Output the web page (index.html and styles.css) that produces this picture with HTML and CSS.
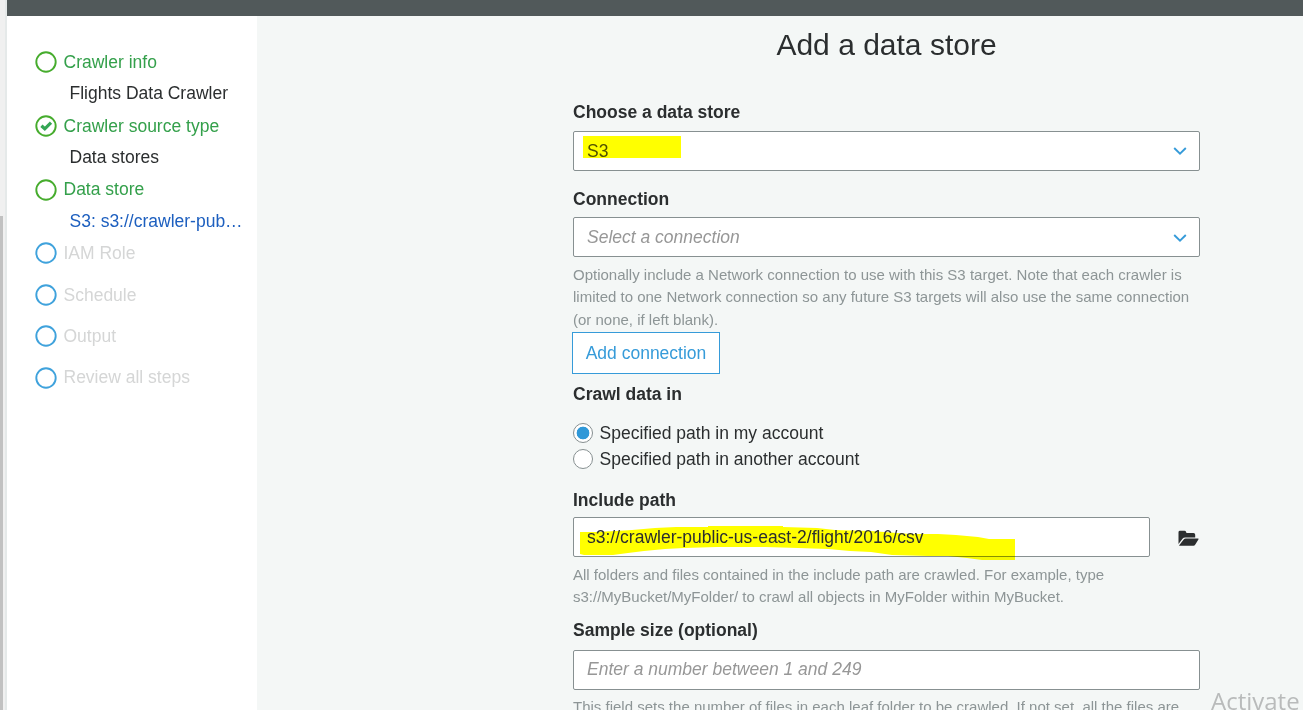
FILE: index.html
```html
<!DOCTYPE html>
<html lang="en">
<head>
<meta charset="utf-8">
<title>Add a data store</title>
<link rel="stylesheet" href="styles.css">
</head>
<body>
<div class="gutter"><div class="thumb"></div></div>
<div class="app">
  <header class="topbar"></header>
  <div class="body">
    <nav class="steps">
      <div class="step done"><svg class="ring" viewBox="0 0 22 22"><circle cx="11" cy="11" r="9.7"/></svg><span>Crawler info</span></div>
      <div class="detail">Flights Data Crawler</div>
      <div class="step done"><svg class="ring" viewBox="0 0 22 22"><circle cx="11" cy="11" r="9.7"/><path class="check" d="M6.4 10.7 9.8 13.8 16 7.7"/></svg><span>Crawler source type</span></div>
      <div class="detail">Data stores</div>
      <div class="step done"><svg class="ring" viewBox="0 0 22 22"><circle cx="11" cy="11" r="9.7"/></svg><span>Data store</span></div>
      <div class="detail current">S3: s3://crawler-pub…</div>
      <div class="step todo"><svg class="ring" viewBox="0 0 22 22"><circle cx="11" cy="11" r="9.7"/></svg><span>IAM Role</span></div>
      <div class="step todo"><svg class="ring" viewBox="0 0 22 22"><circle cx="11" cy="11" r="9.7"/></svg><span>Schedule</span></div>
      <div class="step todo"><svg class="ring" viewBox="0 0 22 22"><circle cx="11" cy="11" r="9.7"/></svg><span>Output</span></div>
      <div class="step todo"><svg class="ring" viewBox="0 0 22 22"><circle cx="11" cy="11" r="9.7"/></svg><span>Review all steps</span></div>
    </nav>
    <main class="form">
      <h1 class="title">Add a data store</h1>

      <section class="group store">
        <div class="label">Choose a data store</div>
        <div class="box select"><span class="value picked">S3</span><svg class="chevron" viewBox="0 0 14 8"><path d="M1.2 1 7 6.6 12.8 1"/></svg><i class="mark-store"></i></div>
      </section>

      <section class="group connection">
        <div class="label">Connection</div>
        <div class="box select"><span class="placeholder">Select a connection</span><svg class="chevron" viewBox="0 0 14 8"><path d="M1.2 1 7 6.6 12.8 1"/></svg></div>
        <p class="hint">Optionally include a Network connection to use with this S3 target. Note that each crawler is<br>limited to one Network connection so any future S3 targets will also use the same connection<br>(or none, if left blank).</p>
        <div class="button">Add connection</div>
      </section>

      <section class="group crawl">
        <div class="label">Crawl data in</div>
        <div class="radio"><i class="dot on"></i><span>Specified path in my account</span></div>
        <div class="radio"><i class="dot"></i><span>Specified path in another account</span></div>
      </section>

      <section class="group path">
        <div class="label">Include path</div>
        <div class="row">
          <div class="box"><span class="value">s3://crawler-public-us-east-2/flight/2016/csv</span>
            <svg class="mark-path" viewBox="0 0 436 36"><path d="M0 7H15L36 6 52 5 75 3 96 2H128V1H203V2L237 3 255 5 291 6 330 9H358L376 10 398 12 409 14H435V35H402L387 33 368 31 348 31 312 30 291 27 270 26 248 24 218 23 185 22H137L104 23 85 24 64 26 48 28 33 30H4L0 29Z"/></svg>
          </div>
          <svg class="folder" viewBox="0 0 21 17"><path d="M.5 14V2.2Q.5.8 2 .8H6.5Q7.8.8 8.2 2.2L8.5 3H15.5Q17.2 3 17.2 4.7V7.4H7.2Q5.5 7.4 4.5 8.7Z"/><path d="M1.2 15.2 5.7 9.5Q6.5 8.5 7.7 8.5H20Q21 8.5 20.4 9.4L17.3 14.6Q16.6 15.8 15.4 15.8H1.5Q.9 15.8 1.2 15.2Z"/></svg>
        </div>
        <p class="hint">All folders and files contained in the include path are crawled. For example, type<br>s3://MyBucket/MyFolder/ to crawl all objects in MyFolder within MyBucket.</p>
      </section>

      <section class="group sample">
        <div class="label">Sample size (optional)</div>
        <div class="box"><span class="placeholder">Enter a number between 1 and 249</span></div>
        <p class="hint">This field sets the number of files in each leaf folder to be crawled. If not set, all the files are</p>
      </section>
    </main>
  </div>
</div>
<div class="watermark">Activate</div>
</body>
</html>
```
FILE: styles.css
```css
* { box-sizing: border-box; }
body {
  margin: 0;
  width: 1303px;
  height: 710px;
  overflow: hidden;
  display: flex;
  background: #f4f7f6;
  color: #2b2e2f;
  font: 17.5px/32px "Liberation Sans", Arial, sans-serif;
}
.gutter {
  width: 7px;
  padding-top: 216px;
  background: #f0f0f0;
  border-right: 2px solid #e5e9e9;
}
.thumb { width: 3px; height: 494px; background: #c1c1c1; }
.app { flex: 1; height: 710px; overflow: hidden; }
.topbar { height: 16px; background: #51595a; }
.body { display: flex; height: 694px; }
.steps {
  width: 250px;
  padding: 30.4px 0 0 28px;
  background: #fff;
  white-space: nowrap;
}
.step { display: flex; align-items: center; gap: 6.5px; height: 32px; }
.step span { margin-bottom: 0.8px; }
.detail { height: 31.7px; padding-left: 34.5px; line-height: 31.7px; }
.done { color: #34a04b; }
.current { color: #1d5fbf; }
.todo { height: 41.4px; color: #d5d6d6; }
.current + .todo { height: 32px; margin-bottom: 4.8px; }
.ring { width: 22px; height: 22px; fill: none; stroke: #46ac2d; stroke-width: 1.9; }
.todo .ring { stroke: #3fa2dc; }
.ring .check { stroke: #34a654; stroke-width: 3.2; }
.form { width: 627px; margin-left: 316px; }
.title {
  margin: 0;
  padding-top: 9px;
  height: 80px;
  font-size: 30px;
  font-weight: 400;
  line-height: 40px;
  text-align: center;
}
.label { height: 32px; font-weight: 700; }
.box {
  position: relative;
  display: flex;
  align-items: center;
  justify-content: space-between;
  height: 40px;
  padding: 0 13px;
  background: #fff;
  border: 1px solid #879091;
  border-radius: 2px;
}
.select { padding-right: 12px; }
.value, .placeholder { position: relative; z-index: 1; white-space: nowrap; }
.placeholder { color: #979797; font-style: italic; }
.picked { color: #515100; }
.chevron { width: 14px; height: 8px; fill: none; stroke: #369bd9; stroke-width: 1.9; }
.connection .chevron { margin-top: 2px; }
.mark-store {
  position: absolute;
  left: 9px;
  top: 4px;
  width: 98px;
  height: 22px;
  background: #ff0;
}
.mark-path {
  position: absolute;
  left: 6px;
  top: 7px;
  width: 436px;
  height: 36px;
  fill: #ff0;
  mix-blend-mode: multiply;
}
.hint {
  margin: 0;
  padding-top: 7px;
  color: #8d9596;
  font-size: 15px;
  line-height: 22.4px;
  white-space: nowrap;
}
.store { height: 86px; padding-top: 3px; }
.store .label { line-height: 26px; }
.connection .label { height: 35px; line-height: 35px; }
.button {
  width: 148px;
  height: 42px;
  margin: 1px 0 0 -1px;
  border: 1px solid #369bd9;
  background: #fff;
  color: #369bd9;
  line-height: 40px;
  text-align: center;
}
.crawl { height: 109px; padding-top: 4px; }
.crawl .label { height: 42px; }
.radio { display: flex; align-items: center; gap: 6.5px; height: 26px; }
.dot {
  width: 20px;
  height: 20px;
  background: #fff;
  border: 1px solid #879091;
  border-radius: 50%;
}
.dot.on { background: radial-gradient(circle, #2f98d8 6px, #fff 6.7px); }
.path { padding-top: 1px; }
.path .label { height: 33px; }
.path .hint { line-height: 22px; }
.row { display: flex; align-items: center; gap: 28px; }
.row .box { width: 577px; }
.folder { width: 21px; height: 17px; margin-top: 2px; fill: #2b2e2f; }
.sample { padding-top: 6px; }
.sample .label { height: 36px; }
.sample .placeholder { margin-bottom: 2px; }
.sample .hint { padding-top: 6px; }
.watermark {
  position: absolute;
  left: 1211px;
  top: 684px;
  color: #b9bbbb;
  font: 24px/34px "Open Sans", "Noto Sans", sans-serif;
}
```
